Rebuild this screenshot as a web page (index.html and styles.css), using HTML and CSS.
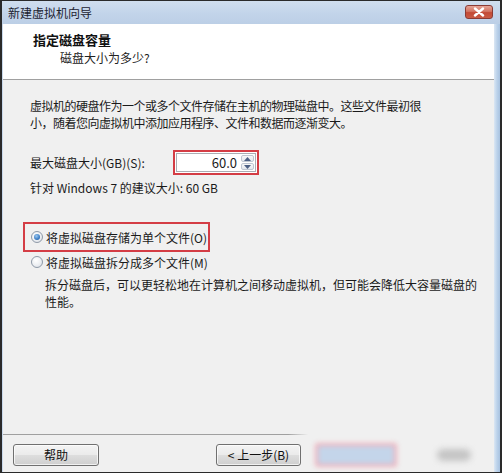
FILE: index.html
```html
<!DOCTYPE html>
<html lang="zh-CN">
<head>
<meta charset="utf-8">
<title>新建虚拟机向导</title>
<link rel="stylesheet" href="styles.css">
</head>
<body>
<div class="window">
  <div class="titlebar">
    <span class="title">新建虚拟机向导</span>
    <span class="close">
      <svg width="14" height="10" viewBox="0 0 14 10"><path d="M3 1.5 L11 8.5 M11 1.5 L3 8.5" stroke="#fff" stroke-width="2.4" stroke-linecap="round"/></svg>
    </span>
  </div>
  <div class="frame">
    <div class="client">
      <div class="header">
        <div class="h-title">指定磁盘容量</div>
        <div class="h-sub">磁盘大小为多少?</div>
      </div>
      <div class="content">
        <p class="intro">虚拟机的硬盘作为一个或多个文件存储在主机的物理磁盘中。这些文件最初很<br>小，随着您向虚拟机中添加应用程序、文件和数据而逐渐变大。</p>
        <div class="size-row">
          <span class="size-label">最大磁盘大小(GB)(S):</span>
          <span class="highlight spin-wrap">
            <span class="spin">
              <span class="spin-value">60.0</span>
              <span class="spin-btns">
                <span class="spin-btn"><svg width="7" height="4" viewBox="0 0 7 4"><path d="M0 4 L3.5 0 L7 4Z" fill="#4d6185"/></svg></span>
                <span class="spin-btn"><svg width="7" height="4" viewBox="0 0 7 4"><path d="M0 0 L3.5 4 L7 0Z" fill="#4d6185"/></svg></span>
              </span>
            </span>
          </span>
        </div>
        <div class="hint">针对 Windows 7 的建议大小: 60 GB</div>
        <div class="highlight radio-box">
          <span class="radio checked"><span class="dot"></span></span>
          <span>将虚拟磁盘存储为单个文件(O)</span>
        </div>
        <div class="radio-row">
          <span class="radio"></span>
          <span>将虚拟磁盘拆分成多个文件(M)</span>
        </div>
        <p class="desc">拆分磁盘后，可以更轻松地在计算机之间移动虚拟机，但可能会降低大容量磁盘的<br>性能。</p>
      </div>
      <div class="footer">
        <button class="btn help">帮助</button>
        <button class="btn back">&lt; 上一步(B)</button>
        <span class="blur-next"></span>
        <span class="blur-cancel"></span>
      </div>
    </div>
    <div class="rframe"></div>
  </div>
</div>
</body>
</html>
```
FILE: styles.css
```css
* { box-sizing: border-box; }
html, body {
  margin: 0;
  padding: 0;
  width: 502px;
  height: 473px;
  overflow: hidden;
  background: #1e1e1e;
}
body {
  font-family: "Noto Sans CJK SC", "Noto Sans", sans-serif;
  font-size: 12px;
  color: #1a1a1a;
}
.window {
  width: 502px;
  height: 473px;
  border-top: 1px solid #2a2a2a;
  border-left: 2px solid #2a2a2a;
  border-right: 2px solid #2a2a2a;
  border-bottom: 1px solid #2a2a2a;
  display: flex;
  flex-direction: column;
  background: #c7d8ec;
}
.titlebar {
  height: 23px;
  flex: none;
  display: flex;
  align-items: center;
  justify-content: space-between;
  padding: 0 7px 0 6px;
  background: linear-gradient(180deg, #d0deee 0%, #c2d4ea 55%, #bccfe6 100%);
}
.title {
  font-size: 12px;
  color: #1c2230;
  line-height: 16px;
}
.close {
  width: 28px;
  height: 14px;
  margin-top: -2px;
  border-radius: 3px;
  border: 1px solid #8a3b35;
  background: linear-gradient(180deg, #e6a496 0%, #d27462 45%, #c34a36 55%, #c95a44 100%);
  display: flex;
  align-items: center;
  justify-content: center;
}
.close svg { display: block; }
.frame {
  flex: 1;
  display: flex;
  min-height: 0;
}
.client {
  flex: 1;
  display: flex;
  flex-direction: column;
  border-left: 1px solid #c9d9ec;
  background: #f0f0f0;
}
.rframe {
  width: 6px;
  flex: none;
  background: linear-gradient(90deg, #dbe7f4 0%, #bcd2ea 50%, #a8c2e0 100%);
}
.header {
  height: 56px;
  flex: none;
  background: #fff;
  border-bottom: 1px solid #a0a0a0;
  padding: 8px 0 0 30px;
}
.h-title {
  font-weight: bold;
  font-size: 13px;
  line-height: 16px;
  color: #111;
}
.h-sub {
  margin: 2px 0 0 27px;
  line-height: 16px;
  color: #222;
}
.content {
  flex: 1;
  padding: 17px 0 0 27px;
  display: flex;
  flex-direction: column;
  align-items: flex-start;
}
.intro {
  margin: 0;
  line-height: 17px;
  letter-spacing: -0.5px;
  white-space: nowrap;
}
.size-row {
  margin-top: 19px;
  display: flex;
  align-items: center;
  height: 25px;
}
.size-label {
  width: 143px;
}
.highlight {
  border: 2px solid #d43d45;
}
.spin-wrap {
  width: 86px;
  height: 25px;
  padding: 1px;
  background: #fff;
}
.spin {
  display: flex;
  height: 100%;
  border: 1px solid #abadb3;
  background: #fff;
  padding-right: 1px;
}
.spin-value {
  flex: 1;
  text-align: right;
  font-size: 13px;
  line-height: 17px;
  padding-right: 4px;
}
.spin-btns {
  width: 13px;
  display: flex;
  flex-direction: column;
  gap: 1px;
  padding: 1px 0;
}
.spin-btn {
  flex: 1;
  border: 1px solid #c0c7d2;
  border-radius: 2px;
  background: linear-gradient(180deg, #f8f8f8, #e4e8ee);
  display: flex;
  align-items: center;
  justify-content: center;
}
.spin-btn svg { display: block; }
.hint {
  margin-top: 4px;
  line-height: 17px;
}
.radio-box {
  margin: 26px 0 0 -7px;
  width: 187px;
  height: 30px;
  display: flex;
  align-items: center;
  padding-left: 6px;
}
.radio-row {
  margin-top: 2px;
  height: 16px;
  display: flex;
  align-items: center;
  margin-left: 1px;
}
.radio {
  width: 12px;
  height: 12px;
  border-radius: 50%;
  border: 1px solid #8f9aa8;
  background: radial-gradient(circle at 40% 35%, #ffffff 0%, #eef0f3 50%, #d6dbe2 100%);
  margin-right: 3px;
  display: flex;
  align-items: center;
  justify-content: center;
  flex: none;
}
.radio .dot {
  width: 6px;
  height: 6px;
  border-radius: 50%;
  background: radial-gradient(circle at 40% 35%, #9cc8ef 0%, #3a7cc4 60%, #1d4f94 100%);
}
.desc {
  margin: 6px 0 0 15px;
  line-height: 17px;
  white-space: nowrap;
}
.footer {
  flex: none;
  height: 38px;
  position: relative;
  display: flex;
  align-items: flex-start;
  padding: 9px 0 0 10px;
  border-top: 1px solid transparent;
  border-image: linear-gradient(90deg, #a0a0a0 0%, #a0a0a0 285px, rgba(160,160,160,0) 305px) 1;
}
.btn {
  height: 22px;
  font-family: inherit;
  font-size: 12px;
  color: #111;
  border: 1px solid #707070;
  border-radius: 3px;
  background: linear-gradient(180deg, #f4f4f4 0%, #ebebeb 48%, #dddddd 52%, #cfcfcf 100%);
  box-shadow: inset 0 0 0 1px rgba(255,255,255,0.7);
  padding: 0;
  line-height: 18px;
}
.help { width: 86px; }
.back { width: 85px; margin-left: 117px; }
.blur-next {
  width: 82px;
  height: 24px;
  margin: -1px 0 0 14px;
  border: 3px solid #efb0ba;
  border-radius: 3px;
  background: #c4d5ea;
  filter: blur(2.5px);
}
.blur-cancel {
  width: 34px;
  height: 12px;
  margin: 5px 0 0 40px;
  background: #c4c4c4;
  border-radius: 6px;
  filter: blur(3px);
}
```
